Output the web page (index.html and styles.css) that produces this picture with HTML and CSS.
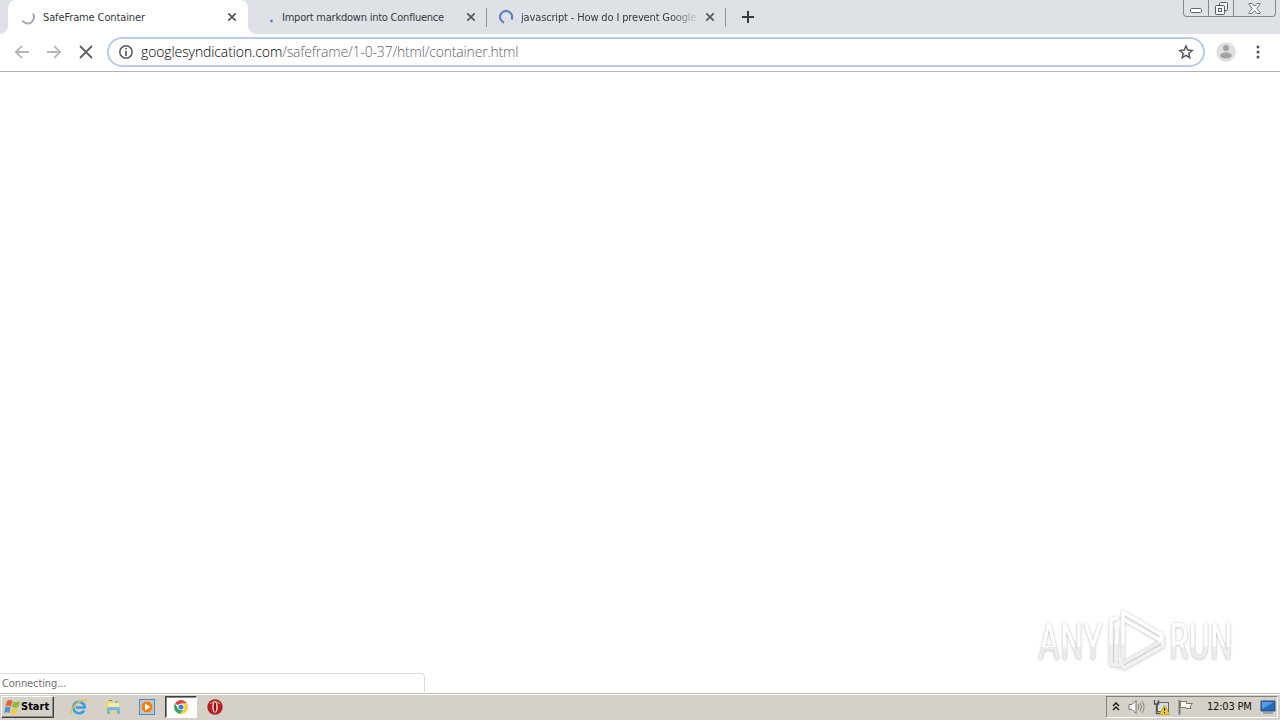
FILE: index.html
```html
<!DOCTYPE html>
<html lang="en">
<head>
    <meta charset="UTF-8">
    <meta name="viewport" content="width=device-width, initial-scale=1.0">
    <title>SafeFrame Container</title>
    <link rel="stylesheet" href="styles.css">
</head>
<body>
    <header class="tab-strip">
        <div class="tab active">
            <svg class="spinner" width="16" height="16" viewBox="0 0 16 16"><path d="M13 4.5A6 6 0 0 1 2.3 11.5" fill="none" stroke="#a6a8ab" stroke-width="2"/></svg>
            <span class="tab-title title-one">SafeFrame Container</span>
            <svg class="close" width="10" height="10" viewBox="0 0 10 10"><path d="M1.3 1.3l7.4 7.4M8.7 1.3L1.3 8.7" stroke="#55585c" stroke-width="1.7"/></svg>
        </div>
        <div class="tab second">
            <svg class="spinner" width="16" height="16" viewBox="0 0 16 16"><circle cx="12.5" cy="12" r="1.4" fill="#5580c4"/></svg>
            <span class="tab-title title-two">Import markdown into Confluence</span>
            <svg class="close" width="10" height="10" viewBox="0 0 10 10"><path d="M1.3 1.3l7.4 7.4M8.7 1.3L1.3 8.7" stroke="#55585c" stroke-width="1.7"/></svg>
        </div>
        <div class="tab divided">
            <svg class="spinner" width="16" height="16" viewBox="0 0 16 16"><path d="M6 13.6A6 6 0 1 1 13.5 10.6" fill="none" stroke="#5b83c5" stroke-width="2.2"/></svg>
            <span class="tab-title title-three">javascript - How do I prevent Google</span>
            <svg class="close" width="10" height="10" viewBox="0 0 10 10"><path d="M1.3 1.3l7.4 7.4M8.7 1.3L1.3 8.7" stroke="#55585c" stroke-width="1.7"/></svg>
        </div>
        <div class="new-tab">
            <svg width="12" height="12" viewBox="0 0 12 12"><path d="M6 0v12M0 6h12" stroke="#36393e" stroke-width="2"/></svg>
        </div>
        <div class="window-buttons">
            <div class="minimize"><svg width="12" height="5" viewBox="0 0 12 5"><rect x=".5" y=".5" width="11" height="4" rx="1" fill="#fff" stroke="#62666c"/></svg></div>
            <div class="restore"><svg width="13" height="13" viewBox="0 0 13 13"><g fill="#f4f5f7" stroke="#555a60"><rect x="4.5" y=".5" width="8" height="8" rx="1"/><rect x=".5" y="3.5" width="9" height="9" rx="1"/><rect x="3.5" y="6.5" width="3" height="3"/></g></svg></div>
            <div class="exit"><svg width="13" height="11" viewBox="0 0 13 11"><path d="M1 .5h3l2.5 2.7L9 .5h3v1L8.7 5.5 12 9.5v1H9L6.5 7.8 4 10.5H1v-1L4.3 5.5 1 1.5z" fill="#fff" stroke="#696d73"/></svg></div>
        </div>
    </header>

    <nav class="toolbar">
        <svg class="nav-icon" width="16" height="16" viewBox="0 0 16 16"><path d="M15 8H2M8 1.8L1.8 8 8 14.2" fill="none" stroke="#b5b7ba" stroke-width="1.8"/></svg>
        <svg class="nav-icon" width="16" height="16" viewBox="0 0 16 16"><path d="M1 8h13M8 1.8L14.2 8 8 14.2" fill="none" stroke="#b5b7ba" stroke-width="1.8"/></svg>
        <svg class="nav-icon" width="16" height="16" viewBox="0 0 16 16"><path d="M2 2l12 12M14 2L2 14" stroke="#5f6368" stroke-width="1.9"/></svg>
        <div class="address-bar">
            <svg class="info" width="14" height="14" viewBox="0 0 14 14"><circle cx="7" cy="7" r="6.2" fill="none" stroke="#55585d" stroke-width="1.5"/><path d="M7 3v1.6M7 6v5" stroke="#55585d" stroke-width="1.7"/></svg>
            <span class="url"><span class="host">googlesyndication.com</span><span class="path">/safeframe/1-0-37/html/container.html</span></span>
            <svg class="star" width="16" height="16" viewBox="0 0 16 16"><path d="M8 2l1.7 4.1 4.4.4-3.3 2.9 1 4.3L8 11.4l-3.8 2.3 1-4.3L1.9 6.5l4.4-.4z" fill="none" stroke="#55595f" stroke-width="1.5"/></svg>
        </div>
        <svg class="avatar" width="20" height="20" viewBox="0 0 20 20"><circle cx="10" cy="10" r="9.8" fill="#dedfe1"/><circle cx="10" cy="6" r="3" fill="#a1a2a4"/><ellipse cx="10" cy="13.5" rx="5.8" ry="3" fill="#a1a2a4"/></svg>
        <svg class="more" width="4" height="16" viewBox="0 0 4 16"><g fill="#505357"><circle cx="2" cy="3" r="1.5"/><circle cx="2" cy="8" r="1.5"/><circle cx="2" cy="13" r="1.5"/></g></svg>
    </nav>

    <main class="page">
        <svg class="watermark" width="210" height="74" viewBox="0 0 210 74">
            <defs>
                <linearGradient id="fade" x1="0" y1="0" x2="0" y2="1">
                    <stop offset="0.58" stop-color="#fff"/>
                    <stop offset="0.58" stop-color="#ececec"/>
                </linearGradient>
            </defs>
            <g class="mark">
                <text x="7" y="54" textLength="65" lengthAdjust="spacingAndGlyphs" fill="url(#fade)">ANY</text>
                <text x="138" y="54" textLength="64" lengthAdjust="spacingAndGlyphs" fill="url(#fade)">RUN</text>
                <g fill="none" stroke-width="3.5" stroke-linejoin="round" stroke-linecap="round">
                    <path d="M131 36L92 58l-6 3" stroke="#eee"/>
                    <path d="M132 32v9L93 63l-3-4" stroke="#f2f2f2"/>
                    <path d="M92 52V36M80 36v23l5 1V36" stroke="#f0f0f0"/>
                    <path d="M80 38V15l6-2M86 24v14" stroke="#fff"/>
                    <path d="M92 38V7l39 23-2 5-35-20" stroke="#fff"/>
                </g>
            </g>
        </svg>
        <div class="status">Connecting...</div>
    </main>

    <footer class="taskbar">
        <div class="start">
            <svg width="17" height="16" viewBox="0 0 17 16"><path d="M3 2Q6 0 8.5 2L7 7.5Q4.500 6 1.5 7.5z" fill="#e8622d"/><path d="M9.5 2.5Q12 4 16 2L14.5 8Q11 9.5 8 7.7z" fill="#8bbb45"/><path d="M1.2 8.5Q4 7 6.7 8.5L5.2 14Q3 12.5 0 14z" fill="#4d94d6"/><path d="M7.7 9Q11 11 14 9L12.5 14.5Q9 16 6.2 14.3z" fill="#f6c83d"/></svg>
            <span>Start</span>
        </div>
        <div class="quick-launch">
            <div class="launch"><svg width="18" height="18" viewBox="0 0 18 18"><path d="M14 12.3A5.7 5.7 0 1 1 14.7 9.5H6" fill="none" stroke="#3aa0e0" stroke-width="2.7"/><path d="M2 15.5C-.5 17 0 12 5 7S17-.5 16.5 4.5" fill="none" stroke="#e3c251" stroke-width="1.5"/></svg></div>
            <div class="launch"><svg width="18" height="18" viewBox="0 0 18 18"><path d="M2 3h5l1 1.5h7V15H2z" fill="#edcf70"/><path d="M4 5h11v8H4z" fill="#fae9a6"/><path d="M5 2.5h3M11 4h3" stroke="#55a663"/><path d="M3 16V11q0-2 2-2h9q2 0 2 2v5h-3v-3.5H6V16z" fill="#75b9e1"/></svg></div>
            <div class="launch"><svg width="18" height="18" viewBox="0 0 18 18"><rect x="1.5" y="1.5" width="15" height="15" fill="#a9cced" stroke="#4d8dca"/><circle cx="9" cy="9" r="6" fill="#f08118" stroke="#fbc06c"/><path d="M7 5.5L12.5 9 7 12.5z" fill="#fff"/></svg></div>
            <div class="launch pressed"><svg width="14" height="14" viewBox="0 0 14 14"><path d="M7 7L1 3.5A7 7 0 0 1 13 3.5H7z" fill="#e34435"/><path d="M1 3.5A7 7 0 0 0 6.5 14L9.8 8.5 7 7 4 8.5z" fill="#3ba457"/><path d="M13 3.5H7L10 8.5 6.5 14A7 7 0 0 0 13 3.5z" fill="#f9cd37"/><circle cx="7" cy="7" r="3.3" fill="#fff"/><circle cx="7" cy="7" r="2.6" fill="#4481d5"/></svg></div>
            <div class="launch"><svg width="16" height="16" viewBox="0 0 16 16"><circle cx="8" cy="8" r="7.7" fill="#b51d21"/><path d="M2 5Q8-2 14 5" fill="#d86462"/><ellipse cx="8" cy="8" rx="2.8" ry="5.8" fill="#f3dcda"/><ellipse cx="8" cy="8" rx="1.3" ry="4.8" fill="#8d1419"/></svg></div>
        </div>
        <div class="tray">
            <svg class="chevrons" width="8" height="9" viewBox="0 0 8 9"><path d="M1 4l3-3 3 3M1 8l3-3 3 3" fill="none" stroke="#111" stroke-width="1.4"/></svg>
            <svg width="17" height="16" viewBox="0 0 17 16"><path d="M1 5.5h3l4-4v13l-4-4H1z" fill="#f7f7f7" stroke="#737373"/><path d="M10 5q2 3 0 6M12 3.5q3 4.500 0 9M14 2q4 6 0 12" fill="none" stroke="#888"/></svg>
            <svg width="17" height="16" viewBox="0 0 17 16"><rect x="4.5" y="3.5" width="11" height="9" fill="#d7dde2" stroke="#656565"/><path d="M1.5 1v4h4V1M3.5 5v9.500H8" fill="none" stroke="#555" stroke-width="1.4"/><path d="M11.5 6l5 9.500h-10z" fill="#f7d329" stroke="#b39513" stroke-width=".7"/><path d="M11.5 9v3M11.5 13v1.3" stroke="#222" stroke-width="1.3"/></svg>
            <svg width="17" height="16" viewBox="0 0 17 16"><path d="M1.5 1v14.500" stroke="#777" stroke-width="2"/><path d="M2.500 2.500h6v2h6L12 7l1 2.500H8v-1H2.500z" fill="#fff" stroke="#777"/></svg>
            <span class="clock">12:03 PM</span>
            <svg class="desktop" width="16" height="14" viewBox="0 0 16 14"><path d="M1 1h14v10H1z" fill="#246bc0" stroke="#255086"/><path d="M2 2h12L2 9z" fill="#579be0"/><path d="M3 13h10" stroke="#82939f" stroke-width="1.5"/></svg>
        </div>
    </footer>
</body>
</html>
```
FILE: styles.css
```css
* {
    box-sizing: border-box;
}
body {
    margin: 0;
    width: 1280px;
    height: 720px;
    overflow: hidden;
    display: flex;
    flex-direction: column;
    background-color: #fff;
    font-family: "DejaVu Sans Condensed", "DejaVu Sans", sans-serif;
    font-stretch: condensed;
    font-size: 11px;
    color: #36393d;
}
svg {
    display: block;
    flex: none;
}

/* Tabs */
.tab-strip {
    height: 34px;
    display: flex;
    background-color: #dee1e6;
    padding-left: 8px;
    position: relative;
}
.tab {
    width: 239px;
    height: 34px;
    display: flex;
    align-items: center;
    padding: 0 10px 0 12px;
    flex: none;
}
.tab.active {
    width: 240px;
    background-color: #fff;
    border-radius: 8px 8px 0 0;
    position: relative;
    padding-right: 11px;
}
.tab.active::before,
.tab.active::after {
    content: "";
    position: absolute;
    bottom: 0;
    width: 8px;
    height: 8px;
}
.tab.active::before {
    left: -8px;
    background: radial-gradient(circle at 0 0, transparent 7.5px, #fff 8px);
}
.tab.active::after {
    right: -8px;
    background: radial-gradient(circle at 100% 0, transparent 7.5px, #fff 8px);
}
.tab.second {
    margin-left: -1px;
}
.tab.divided {
    width: 240px;
    padding-right: 11px;
    background: linear-gradient(#8d9095, #8d9095) 0 8px / 1px 19px no-repeat,
        linear-gradient(#8d9095, #8d9095) 100% 8px / 1px 19px no-repeat;
}
.tab-title {
    margin-left: 7px;
    width: 176px;
    padding-top: 1px;
    overflow: hidden;
    white-space: nowrap;
    line-height: 16px;
}
.title-one { letter-spacing: -0.12px; }
.title-two { letter-spacing: -0.23px; }
.title-three {
    letter-spacing: -0.15px;
    -webkit-mask-image: linear-gradient(to right, #000 150px, transparent 178px);
    mask-image: linear-gradient(to right, #000 150px, transparent 178px);
}
.close {
    margin-left: auto;
}
.new-tab {
    padding: 11px 0 0 16px;
}
.window-buttons {
    position: absolute;
    right: 4px;
    top: 0;
    width: 93px;
    height: 17px;
    display: flex;
    border: 1px solid #85898f;
    border-top: none;
    border-radius: 0 0 4px 4px;
}
.window-buttons div {
    display: flex;
    justify-content: center;
    border-right: 1px solid #85898f;
}
.minimize { width: 25px; padding-top: 8px; }
.restore { width: 25px; padding-top: 2px; }
.window-buttons .exit { flex: 1; padding-top: 3px; border-right: none; }

/* Toolbar */
.toolbar {
    height: 38px;
    display: flex;
    align-items: center;
    padding: 0 20px 1px 14px;
    border-bottom: 1px solid #b0b3b5;
    background-color: #fff;
}
.nav-icon {
    margin-right: 16px;
}
.address-bar {
    width: 1098px;
    height: 30px;
    margin-left: -3px;
    border: 2px solid #b7cbe9;
    border-radius: 15px;
    display: flex;
    align-items: center;
    padding: 0 9px 0 10px;
}
.url {
    margin-left: 8px;
    font-family: "Open Sans", "Noto Sans", sans-serif;
    font-stretch: normal;
    font-size: 14px;
    font-weight: 300;
    white-space: nowrap;
    line-height: 20px;
}
.host {
    color: #000;
    letter-spacing: -0.11px;
}
.path {
    color: #5f6164;
    letter-spacing: -0.19px;
}
.star { margin-left: auto; }
.avatar { margin-left: 11px; }
.more { margin-left: auto; }

/* Page area */
.page {
    flex: 1;
    position: relative;
}
.status {
    position: absolute;
    left: 0;
    bottom: 1px;
    width: 425px;
    height: 19px;
    border: 1px solid #dcdcdc;
    border-left: none;
    border-bottom: none;
    border-radius: 0 4px 0 0;
    padding-left: 2px;
    line-height: 19px;
    letter-spacing: -0.1px;
    color: #6e7073;
}
.watermark {
    position: absolute;
    left: 1031px;
    top: 533px;
    overflow: visible;
}
.mark {
    filter: drop-shadow(0 0 1px rgba(0, 0, 0, 0.18)) drop-shadow(0 1px 1.5px rgba(0, 0, 0, 0.12));
}
.mark text {
    font-family: Roboto, "Liberation Sans", sans-serif;
    font-size: 50px;
}

/* Taskbar */
.taskbar {
    height: 27px;
    display: flex;
    align-items: center;
    padding: 1px 2px 2px 1px;
    background-color: #d5d0c8;
    border-top: 1px solid #bcbab3;
    box-shadow: inset 0 1px #fff;
}
.start {
    width: 53px;
    height: 22px;
    display: flex;
    align-items: center;
    padding-left: 2px;
    border: 1px solid;
    border-color: #fff #404040 #404040 #fff;
    box-shadow: inset -1px -1px #8c8984;
    font-weight: bold;
    color: #000;
}
.quick-launch {
    display: flex;
    margin-left: 9px;
    gap: 2px;
}
.launch {
    width: 32px;
    height: 22px;
    display: flex;
    align-items: center;
    justify-content: center;
}
.pressed {
    background-color: #fff;
    border: 1px solid;
    border-color: #404040 #fff #fff #404040;
    box-shadow: inset 1px 1px #8c8984;
}
.tray {
    margin-left: auto;
    width: 172px;
    height: 22px;
    display: flex;
    align-items: center;
    padding: 0 1px 0 5px;
    border: 1px solid;
    border-color: #85827d #fff #fff #85827d;
    gap: 8px;
    color: #111;
}
.clock {
    margin-left: 4px;
    width: 46px;
    white-space: nowrap;
    letter-spacing: -0.2px;
}
.desktop {
    margin-left: auto;
}
```
